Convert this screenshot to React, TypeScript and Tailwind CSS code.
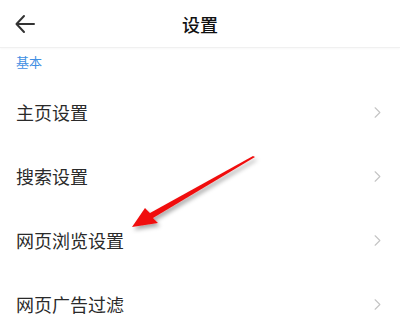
import { ChevronRight } from 'lucide-react'

const rows = ['主页设置', '搜索设置', '网页浏览设置', '网页广告过滤']

export default function App() {
  return (
    <div className="relative w-[400px] h-[324px] overflow-hidden bg-white" style={{ fontFamily: '"Noto Sans CJK SC", "Noto Sans", sans-serif' }}>
      {/* Header */}
      <div className="relative flex items-center justify-center h-12 border-b border-[#f0f0f0] shadow-[0_1px_2px_rgba(0,0,0,0.03)]">
        <svg className="absolute left-[14px] top-[14px]" width="22" height="20" viewBox="0 0 22 20" fill="none">
          <path d="M20 10H3M10 2L2.5 10 10 18" stroke="#333" strokeWidth="2" strokeLinecap="round" strokeLinejoin="round" />
        </svg>
        <span className="text-[18px] font-medium text-[#111] leading-none">设置</span>
      </div>

      {/* Section label */}
      <div className="h-8 px-4 pt-[4px] text-[13px] text-[#3f8fe3] leading-[20px]">基本</div>

      {/* Rows */}
      {rows.map(r => (
        <div key={r} className="flex items-center justify-between h-16 pl-4 pr-[13px]">
          <span className="text-[18px] text-[#2a2a2a] leading-none">{r}</span>
          <ChevronRight size={19} strokeWidth={1.4} className="text-[#c4c4c4]" />
        </div>
      ))}

      {/* Red annotation arrow */}
      <svg className="absolute left-0 top-0 pointer-events-none" width="400" height="324" viewBox="0 0 400 324">
        <defs>
          <filter id="sh" x="-20%" y="-20%" width="140%" height="140%">
            <feDropShadow dx="2" dy="3" stdDeviation="2" floodColor="#000" floodOpacity="0.35" />
          </filter>
        </defs>
        <path
          d="M255 157 L153 218 L158 223 L132 227 L145 208 L150 213 L253 156 Z"
          fill="#f01010"
          filter="url(#sh)"
        />
      </svg>
    </div>
  )
}
